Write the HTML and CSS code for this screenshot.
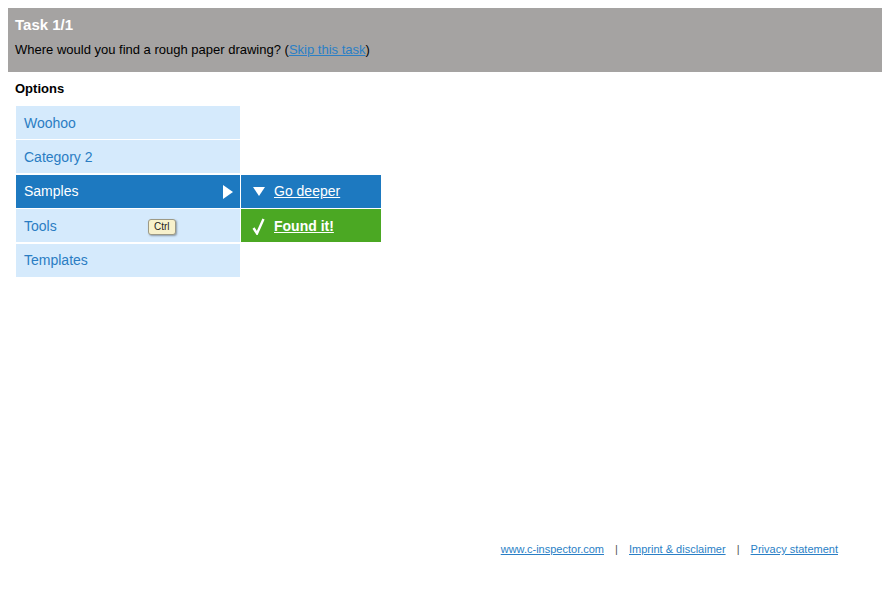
FILE: index.html
```
<!DOCTYPE html>
<html lang="en">
<head>
    <meta charset="utf-8" />
    <title>Task 1/1</title>
    <link rel="stylesheet" href="styles.css">
</head>
<body>
    <div class="task-bar">
        <h1>Task 1/1</h1>
        <p>Where would you find a rough paper drawing? (<a href="#">Skip this task</a>)</p>
    </div>
    <main class="options">
        <h2>Options</h2>
        <div class="tree">
            <ul class="level">
                <li><a href="#">Woohoo</a></li>
                <li><a href="#">Category 2</a></li>
                <li class="open"><a href="#">Samples</a><span class="arrow"></span></li>
                <li><a href="#">Tools</a><span class="kbd">Ctrl</span></li>
                <li><a href="#">Templates</a></li>
            </ul>
            <ul class="level sub">
                <li class="spacer"></li>
                <li class="spacer"></li>
                <li class="deeper"><span class="down"></span><a href="#">Go deeper</a></li>
                <li class="found">
                    <svg class="check" width="13" height="17" viewBox="0 0 13 17"><polyline points="1.5,10 5,15.5 11.5,1" fill="none" stroke="#fff" stroke-width="2.4" /></svg>
                    <a href="#">Found it!</a>
                </li>
            </ul>
        </div>
    </main>
    <footer>
        <a href="#">www.c-inspector.com</a>
        <span class="sep">|</span>
        <a href="#">Imprint &amp; disclaimer</a>
        <span class="sep">|</span>
        <a href="#">Privacy statement</a>
    </footer>
</body>
</html>
```

FILE: styles.css
```
:root {
    --blue: #1d79c0;
    --light: #d5eafc;
    --link: #2a7fc6;
}
body {
    margin: 8px 0 8px 8px;
    font-family: "Liberation Sans", Arial, sans-serif;
    color: #000;
    background: #fff;
}
a {
    color: var(--link);
}
.task-bar {
    background: #a5a3a2;
    height: 64px;
    padding: 8px 7px 0;
    box-sizing: border-box;
}
.task-bar h1 {
    margin: 0;
    font-size: 15px;
    line-height: 18px;
    color: #fff;
}
.task-bar p {
    margin: 8px 0 0;
    font-size: 13px;
    line-height: 16px;
}
.options {
    padding: 0 8px;
    height: 462px;
}
.options h2 {
    font-size: 13px;
    line-height: 16px;
    margin: 9px 0 9px -1px;
}
.tree {
    display: flex;
    gap: 1px;
}
.level {
    list-style: none;
    margin: 0;
    padding: 0;
    width: 224px;
}
.level li {
    position: relative;
    height: 33px;
    margin-bottom: 1.4px;
    background: var(--light);
    font-size: 14px;
    line-height: 33px;
    padding: 1px 0 0 8px;
    box-sizing: border-box;
    display: flex;
    align-items: center;
}
.level li a {
    text-decoration: none;
    color: #2a7dc3;
}
.level li.open {
    background: var(--blue);
}
.level li.open a {
    color: #fff;
}
.arrow {
    position: absolute;
    right: 7px;
    top: 10px;
    width: 0;
    height: 0;
    border-top: 7px solid transparent;
    border-bottom: 7px solid transparent;
    border-left: 10px solid #fff;
}
.kbd {
    position: absolute;
    left: 132px;
    top: 10px;
    font-size: 10px;
    line-height: 14px;
    padding: 0 5px;
    background: #f7f1cc;
    border: 1px solid #9d9a86;
    border-radius: 3px;
    box-shadow: 1px 1px 2px rgba(0, 0, 0, 0.35);
    color: #222;
}
.sub {
    width: 140px;
}
.sub li.spacer {
    background: none;
}
.sub li.deeper {
    background: var(--blue);
    padding-left: 12px;
}
.sub li.found {
    background: #4ba823;
    padding-left: 11px;
}
.sub li a {
    color: #fff;
    text-decoration: underline;
}
.sub li.found a {
    font-weight: bold;
}
.down {
    width: 0;
    height: 0;
    border-left: 6px solid transparent;
    border-right: 6px solid transparent;
    border-top: 9px solid #fff;
    margin-right: 9px;
}
.check {
    margin-right: 9px;
}
footer {
    text-align: right;
    padding-right: 44px;
    font-size: 11px;
    color: #555;
}
footer a {
    color: var(--link);
}
footer .sep {
    margin: 0 8px;
}
```
